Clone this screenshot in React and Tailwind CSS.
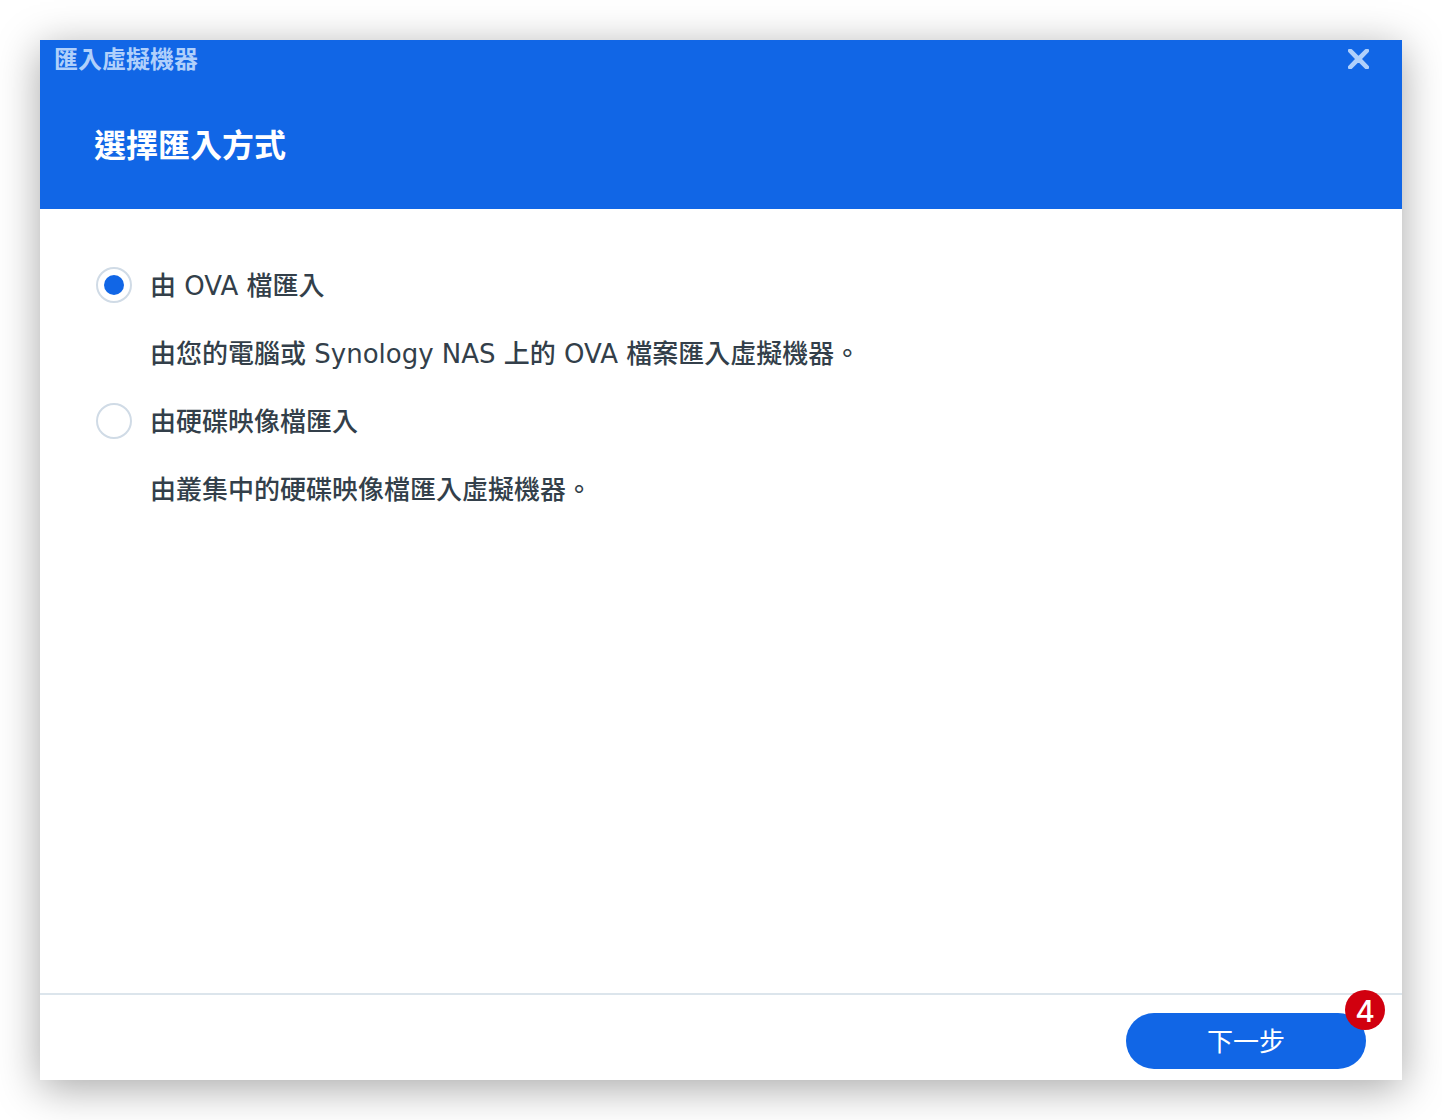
import React, { useState } from "react";

const options = [
  { id: "ova", label: "由 OVA 檔匯入", description: "由您的電腦或 Synology NAS 上的 OVA 檔案匯入虛擬機器。" },
  { id: "disk", label: "由硬碟映像檔匯入", description: "由叢集中的硬碟映像檔匯入虛擬機器。" },
];

export default function App() {
  const [selected, setSelected] = useState("ova");
  return (
    <div className="flex min-h-screen bg-white p-10 font-['DejaVu_Sans','Noto_Sans_CJK_TC',sans-serif] text-[#333f4a]">
      <main className="flex flex-1 flex-col bg-white shadow-[0_8px_40px_rgba(0,0,0,0.35)]">
        <header className="h-[169px] bg-[#1166e6]">
          <div className="flex h-[38px] items-center justify-between pr-8 pl-[14px]">
            <h1 className="pt-0.5 text-2xl leading-9 font-bold text-[#b0d0fb]">匯入虛擬機器</h1>
            <button type="button" aria-label="關閉" className="text-[#b0d0fb]">
              <svg className="h-6 w-6" viewBox="0 0 24 24" fill="currentColor" stroke="currentColor" strokeWidth="2" strokeLinejoin="round">
                <path d="M3 3H5.2L12.5 10.2 19.8 3H22V4.2L14.6 12 22 19.8V21H19.8L12.5 13.8 5.2 21H3V19.8L10.4 12 3 4.2Z" />
              </svg>
            </button>
          </div>
          <h2 className="px-[54px] pt-11 text-[32px] leading-12 font-bold text-white">選擇匯入方式</h2>
        </header>
        <form className="flex-1 px-14 pt-[42px]">
          {options.map((o) => (
            <div key={o.id}>
              <label htmlFor={o.id} className="flex h-[68px] items-center gap-[18px] text-[26px] leading-[68px] font-medium">
                <input
                  id={o.id}
                  type="radio"
                  name="method"
                  checked={selected === o.id}
                  onChange={() => setSelected(o.id)}
                  aria-describedby={o.id + "-description"}
                  className="grid h-9 w-9 appearance-none place-items-center rounded-full border-2 border-[#d0dbe6] bg-white before:h-5 before:w-5 before:rounded-full checked:before:bg-[#1166e6]"
                />
                <span className="pt-0.5">{o.label}</span>
              </label>
              <p id={o.id + "-description"} className="h-[68px] pt-px pl-[54px] text-[26px] leading-[68px] font-medium">{o.description}</p>
            </div>
          ))}
        </form>
        <footer className="flex h-[87px] justify-end border-t-2 border-[#dce5ec] pt-[18px] pr-9">
          <div className="relative h-14">
            <button type="button" className="h-14 w-60 rounded-full bg-[#1166e6] pt-0.5 text-[26px] text-white">下一步</button>
            <span className="absolute -top-[23px] -right-[19px] grid h-10 w-10 place-items-center rounded-full bg-[#d1000f] pt-0.5 font-['Inter',sans-serif] text-[30px] leading-9 font-medium text-white">4</span>
          </div>
        </footer>
      </main>
    </div>
  );
}
